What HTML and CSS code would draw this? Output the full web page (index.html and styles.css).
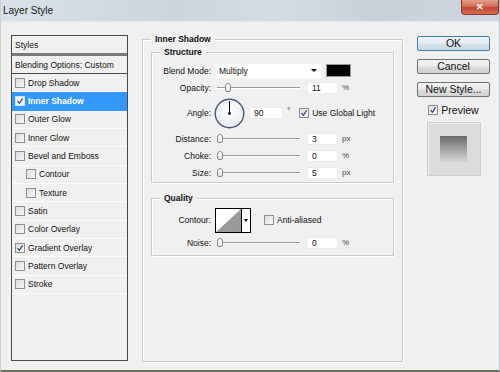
FILE: index.html
```html
<!DOCTYPE html>
<html lang="en">
<head>
  <meta charset="UTF-8" />
  <title>Layer Style</title>
  <link rel="stylesheet" href="styles.css">
</head>
<body>

<div class="window">
  <div class="titlebar">
    <span class="title">Layer Style</span>
    <span class="close">&#x2715;</span>
  </div>

  <div class="content">

    <!-- Linke Liste der Effekte -->
    <div class="styles-list">
      <div class="list-head">Styles</div>
      <div class="list-blend">Blending Options: Custom</div>
      <div class="item"><span class="cb"></span>Drop Shadow</div>
      <div class="item selected"><span class="cb checked"><svg viewBox="0 0 10 10"><path d="M2 5.2 L4.2 7.8 L8.3 1.8" /></svg></span>Inner Shadow</div>
      <div class="item"><span class="cb"></span>Outer Glow</div>
      <div class="item"><span class="cb"></span>Inner Glow</div>
      <div class="item"><span class="cb"></span>Bevel and Emboss</div>
      <div class="item sub"><span class="cb"></span>Contour</div>
      <div class="item sub"><span class="cb"></span>Texture</div>
      <div class="item"><span class="cb"></span>Satin</div>
      <div class="item"><span class="cb"></span>Color Overlay</div>
      <div class="item"><span class="cb checked"><svg viewBox="0 0 10 10"><path d="M2 5.2 L4.2 7.8 L8.3 1.8" /></svg></span>Gradient Overlay</div>
      <div class="item"><span class="cb"></span>Pattern Overlay</div>
      <div class="item"><span class="cb"></span>Stroke</div>
    </div>

    <!-- Einstellungen -->
    <fieldset class="group main">
      <legend>Inner Shadow</legend>

      <fieldset class="group">
        <legend>Structure</legend>

        <div class="row">
          <span class="lbl">Blend Mode:</span>
          <div class="select">Multiply<span class="arrow"></span></div>
          <span class="swatch"></span>
        </div>

        <div class="row">
          <span class="lbl">Opacity:</span>
          <div class="slider"><span class="thumb" style="margin-left: 8px"></span></div>
          <span class="field">11</span>
          <span class="unit">%</span>
        </div>

        <div class="row angle-row">
          <span class="lbl">Angle:</span>
          <svg class="dial" width="31" height="31" viewBox="0 0 31 31">
            <defs>
              <radialGradient id="dialbg" cx="50%" cy="40%" r="60%">
                <stop offset="0" stop-color="#ffffff" />
                <stop offset="1" stop-color="#e8eaef" />
              </radialGradient>
            </defs>
            <circle cx="15.5" cy="15.5" r="14.3" fill="url(#dialbg)" stroke="#4c5878" stroke-width="1.4" />
            <line x1="15.5" y1="15.5" x2="15.5" y2="3" stroke="#000" stroke-width="1" />
            <circle cx="15.5" cy="15.5" r="1.4" fill="#000" />
          </svg>
          <span class="field wide">90</span>
          <span class="deg">&deg;</span>
          <span class="cb checked"><svg viewBox="0 0 10 10"><path d="M2 5.2 L4.2 7.8 L8.3 1.8" /></svg></span>
          <span class="cb-label">Use Global Light</span>
        </div>

        <div class="row">
          <span class="lbl">Distance:</span>
          <div class="slider"><span class="thumb"></span></div>
          <span class="field">3</span>
          <span class="unit">px</span>
        </div>

        <div class="row">
          <span class="lbl">Choke:</span>
          <div class="slider"><span class="thumb"></span></div>
          <span class="field">0</span>
          <span class="unit">%</span>
        </div>

        <div class="row">
          <span class="lbl">Size:</span>
          <div class="slider"><span class="thumb"></span></div>
          <span class="field">5</span>
          <span class="unit">px</span>
        </div>
      </fieldset>

      <fieldset class="group quality">
        <legend>Quality</legend>

        <div class="row contour-row">
          <span class="lbl">Contour:</span>
          <div class="contour">
            <svg width="27" height="25" viewBox="0 0 27 25">
              <rect x="0.5" y="0.5" width="26" height="24" fill="#fff" stroke="#000" />
              <polygon points="1,24 26,1 26,24" fill="#9a9a9a" />
            </svg>
            <span class="contour-drop"><span class="arrow"></span></span>
          </div>
          <span class="cb"></span>
          <span class="cb-label">Anti-aliased</span>
        </div>

        <div class="row">
          <span class="lbl">Noise:</span>
          <div class="slider"><span class="thumb"></span></div>
          <span class="field">0</span>
          <span class="unit">%</span>
        </div>
      </fieldset>
    </fieldset>

    <!-- Buttons rechts -->
    <div class="actions">
      <button class="btn default">OK</button>
      <button class="btn">Cancel</button>
      <button class="btn">New Style...</button>
      <div class="preview-check">
        <span class="cb checked"><svg viewBox="0 0 10 10"><path d="M2 5.2 L4.2 7.8 L8.3 1.8" /></svg></span>
        <span>Preview</span>
      </div>
      <div class="preview">
        <div class="preview-inner"></div>
      </div>
    </div>

  </div>
</div>

</body>
</html>
```

FILE: styles.css
```css
* {
  box-sizing: border-box;
}
body {
  margin: 0;
  font-family: "Liberation Sans", Arial, sans-serif;
  font-size: 8.5px;
  color: #111;
  overflow: hidden;
}

.window {
  width: 500px;
  height: 372px;
  display: flex;
  flex-direction: column;
  background: #f0f0f0;
  border-left: 1px solid #cfd2c4;
  border-right: 1px solid #b8c0c8;
  border-bottom: 2px solid #6a7560;
}

/* --- Titelleiste --- */
.titlebar {
  height: 22px;
  flex-shrink: 0;
  display: flex;
  align-items: flex-start;
  justify-content: space-between;
  background: linear-gradient(to right, #dbe1e8 0%, #cdd4dd 35%, #d6dce3 55%, #c8d0da 75%, #cfd6df 100%);
  border-bottom: 1px solid #e4e8ec;
}
.title {
  font-size: 10px;
  color: #1a1a1a;
  padding: 5px 0 0 2px;
}
.close {
  width: 38px;
  height: 15px;
  display: flex;
  align-items: center;
  justify-content: center;
  color: #fff;
  font-size: 9px;
  font-weight: bold;
  background: linear-gradient(#e3a08e, #cf6e58 45%, #c24530 55%, #d2705a);
  border: 1px solid #8a3a2c;
  border-top: 0;
  border-radius: 0 0 4px 4px;
}

.content {
  flex: 1;
  display: flex;
  align-items: stretch;
  padding: 11px 9px 8px 10px;
}

/* --- Liste links --- */
.styles-list {
  width: 117px;
  flex-shrink: 0;
  margin: 2px 0 1px 0;
  border: 1px solid #4a4a4a;
  background: #f0f0f0;
}
.list-head {
  height: 17px;
  padding-left: 3px;
  display: flex;
  align-items: center;
}
.list-blend {
  height: 21px;
  padding-left: 3px;
  display: flex;
  align-items: center;
  border-top: 3px solid #7a7a7a;
  border-bottom: 1px solid #4a4a4a;
}
.item {
  height: 18.35px;
  display: flex;
  align-items: center;
  padding-left: 3px;
  border-bottom: 1px solid #fbfbfb;
}
.item.sub {
  padding-left: 14px;
}
.item.selected {
  background: #3399ff;
  color: #fff;
  font-weight: bold;
  border-bottom-color: #3399ff;
}

/* Checkbox */
.cb {
  width: 10px;
  height: 10px;
  flex-shrink: 0;
  margin-right: 3px;
  border: 1px solid #8e8f8f;
  background: linear-gradient(135deg, #dcdcdc, #f8f8f8);
  display: inline-flex;
}
.cb svg {
  width: 8px;
  height: 8px;
}
.cb svg path {
  fill: none;
  stroke: #2c4a8e;
  stroke-width: 1.6;
}
.selected .cb {
  background: #f4f4f4;
  border-color: #d0e4f8;
}

/* --- Gruppen --- */
.group {
  margin: 0;
  padding: 4px 8px 1px 8px;
  min-width: 0;
  border: 1px solid #cbcbcb;
  box-shadow: inset 1px 1px 0 #fff, 1px 1px 0 #fff;
}
.group legend {
  padding: 0 4px;
  font-weight: bold;
  line-height: 12px;
  background: #f0f0f0;
}
.group.main {
  width: 261px;
  flex-shrink: 0;
  margin-left: 14px;
  padding: 1px 8px 0 8px;
}
.group.quality {
  margin-top: 9px;
  padding: 2px 8px 4px 8px;
}

.row {
  height: 17px;
  display: flex;
  align-items: center;
}
.row.angle-row {
  height: 34px;
}
.row.contour-row {
  height: 28px;
}
.lbl {
  width: 51px;
  flex-shrink: 0;
  margin-right: 4px;
  text-align: right;
}

.select {
  width: 107px;
  height: 16px;
  display: flex;
  align-items: center;
  justify-content: space-between;
  padding: 0 4px 0 3px;
  background: #fff;
  border: 1px solid #f4f4f4;
}
.arrow {
  width: 0;
  height: 0;
  border-left: 3px solid transparent;
  border-right: 3px solid transparent;
  border-top: 3px solid #000;
}
.swatch {
  width: 25px;
  height: 13px;
  margin-left: 4px;
  background: #000;
  border: 1px solid #9a9a9a;
}

.slider {
  width: 85px;
  height: 11px;
  display: flex;
  align-items: center;
  padding-left: 2px;
  background:
    linear-gradient(#9c9c9c, #9c9c9c) 2px 5px / 83px 1px no-repeat,
    linear-gradient(#fff, #fff) 2px 6px / 83px 1px no-repeat;
}
.thumb {
  width: 6px;
  height: 9px;
  border: 1px solid #8a8a8a;
  border-radius: 3px 3px 2px 2px;
  background: linear-gradient(#fdfdfd, #e2e2e2);
}

.field {
  width: 31px;
  height: 12px;
  margin-left: 7px;
  padding-left: 4px;
  display: flex;
  align-items: center;
  background: #fff;
  border: 1px solid #ececec;
}
.field.wide {
  width: 34px;
  margin-left: 4px;
}
.unit {
  margin-left: 4px;
  color: #444;
  font-size: 8px;
}
.deg {
  margin: -5px 9px 0 4px;
  font-size: 8px;
}
.cb-label {
  white-space: nowrap;
}
.dial {
  flex-shrink: 0;
  margin-left: -1px;
}

.contour {
  display: flex;
  margin-right: 13px;
}
.contour svg {
  display: block;
}
.contour-drop {
  width: 9px;
  height: 25px;
  display: flex;
  align-items: center;
  justify-content: center;
  background: #fff;
  border: 1px solid #000;
  border-left: 0;
}
.contour-drop .arrow {
  border-left-width: 2px;
  border-right-width: 2px;
}

/* --- Rechte Spalte --- */
.actions {
  width: 73px;
  flex-shrink: 0;
  margin: 3px 0 0 14px;
  display: flex;
  flex-direction: column;
  align-items: center;
}
.btn {
  width: 73px;
  height: 15px;
  margin: 0 0 8px 0;
  padding: 0;
  font-family: "Liberation Sans", Arial, sans-serif;
  font-size: 10.5px;
  line-height: 13px;
  color: #111;
  border: 1px solid #707070;
  border-radius: 2px;
  background: linear-gradient(#f3f3f3, #ebebeb 48%, #dddddd 52%, #d3d3d3);
}
.btn.default {
  border-color: #3c7fb1;
  background: linear-gradient(#eef4f8, #e4ecf2 48%, #d6e1e9 52%, #cbd8e2);
}
.preview-check {
  display: flex;
  align-items: center;
  margin: -1px 0 0 0;
  font-size: 10.5px;
}
.preview {
  width: 54px;
  height: 54px;
  margin-top: 6px;
  display: flex;
  align-items: center;
  justify-content: center;
  background: #dcdcdc;
  border: 1px solid #d0d0d0;
  box-shadow: inset 1px 1px 0 #ededed;
}
.preview-inner {
  width: 27px;
  height: 26px;
  background: linear-gradient(#686868, #a2a2a2 50%, #d6d6d6);
}
```
